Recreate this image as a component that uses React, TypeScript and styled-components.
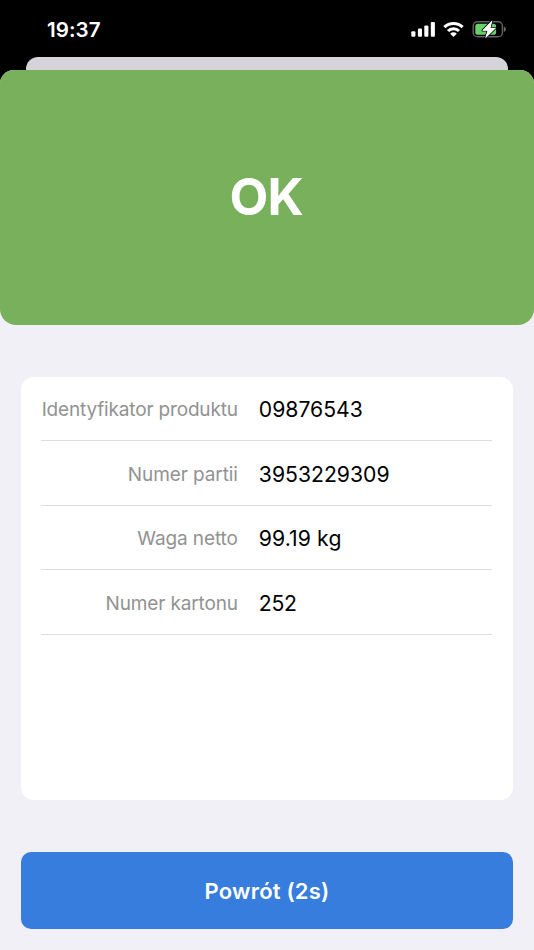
import React from "react";
import styled, { createGlobalStyle } from "styled-components";

const GlobalStyle = createGlobalStyle`
  * { box-sizing: border-box; }
  body {
    margin: 0;
    background: #000;
    font-family: Inter, "Liberation Sans", sans-serif;
    -webkit-font-smoothing: antialiased;
  }
`;

const Screen = styled.div`
  display: flex;
  flex-direction: column;
  width: 534px;
  height: 950px;
  overflow: hidden;
  background: #000;
`;

const StatusBar = styled.header`
  display: flex;
  justify-content: space-between;
  height: 57px;
  padding: 0 28px 0 47px;
`;

const Clock = styled.time`
  padding-top: 17px;
  font-size: 20.6px;
  line-height: 26px;
  font-weight: 600;
  letter-spacing: 0.05px;
  color: #fff;
`;

const StatusIcons = styled.div`
  padding-top: 16px;

  svg { display: block; }
`;

const SheetBehind = styled.div`
  flex: none;
  height: 13px;
  margin: 0 26px;
  border-radius: 12px 12px 0 0;
  background: #d6d4da;
`;

const Sheet = styled.main`
  flex: 1;
  display: flex;
  flex-direction: column;
  border-radius: 14px 14px 0 0;
  background: #f1f0f6;
  overflow: hidden;
`;

const ResultBanner = styled.section`
  flex: none;
  display: flex;
  align-items: center;
  justify-content: center;
  height: 255.4px;
  padding-bottom: 1.4px;
  border-radius: 0 0 16px 16px;
  background: #79b05b;
`;

const ResultText = styled.h1`
  margin: 0;
  padding-right: 1.5px;
  font-size: 50.4px;
  line-height: 60px;
  font-weight: 700;
  letter-spacing: -0.8px;
  color: #fff;
`;

const Card = styled.dl`
  flex: none;
  height: 423.5px;
  margin: 51.6px 21px 0;
  padding: 0 21px 0 20.3px;
  border-radius: 13px;
  background: #fff;
`;

const Row = styled.div`
  display: grid;
  grid-template-columns: 196.5px 1fr;
  column-gap: 21px;
  align-items: center;
  height: 64.45px;
  border-bottom: 1px solid #dedede;
`;

const Label = styled.dt<{ $tracking: number }>`
  padding-top: 3px;
  font-size: 19px;
  line-height: 26px;
  letter-spacing: ${(p) => p.$tracking}px;
  text-align: right;
  white-space: nowrap;
  color: #929292;
`;

const Value = styled.dd<{ $tracking: number }>`
  margin: 0;
  padding-top: 1.5px;
  font-size: 21.2px;
  line-height: 28px;
  letter-spacing: ${(p) => p.$tracking}px;
  white-space: nowrap;
  color: #000;
`;

const ReturnButton = styled.button`
  flex: none;
  height: 77.3px;
  margin: 51.7px 21px 0;
  padding: 0;
  border: 0;
  border-radius: 10px;
  background: #377ddd;
  color: #fff;
  font-family: inherit;
  font-size: 22px;
  font-weight: 600;
  letter-spacing: 0.2px;
`;

const rows = [
  { label: "Identyfikator produktu", value: "09876543", labelTracking: -0.17, valueTracking: 0 },
  { label: "Numer partii", value: "3953229309", labelTracking: -0.1, valueTracking: 0 },
  { label: "Waga netto", value: "99.19 kg", labelTracking: -0.1, valueTracking: 0.1 },
  { label: "Numer kartonu", value: "252", labelTracking: -0.15, valueTracking: -0.3 },
];

function Indicators() {
  return (
    <svg width="96" height="26" viewBox="0 0 96 26" aria-hidden="true">
      <g fill="#fff">
        <rect x="1.3" y="15.2" width="4.1" height="5.6" rx="1.1" />
        <rect x="7.9" y="12.6" width="4.1" height="8.2" rx="1.1" />
        <rect x="14.3" y="9.4" width="4.1" height="11.4" rx="1.1" />
        <rect x="20.8" y="6" width="4.1" height="14.8" rx="1.1" />
      </g>
      <g fill="none" stroke="#fff" strokeWidth="3.1">
        <path d="M34.4 11.2a13 13 0 0 1 18.2 0" />
        <path d="M38 15a7.8 7.8 0 0 1 11 0" />
      </g>
      <path fill="#fff" d="M40.2 17.7a4.7 4.7 0 0 1 6.6 0L43.5 21.1z" />
      <rect x="63.2" y="5.8" width="29.2" height="15" rx="4.4" fill="none" stroke="#626264" strokeWidth="1.4" />
      <path fill="#6a6a6c" d="M93.8 10.6q2.1 .8 2.1 2.7t-2.1 2.7z" />
      <rect x="65.3" y="7.8" width="20.8" height="11" rx="2.6" fill="#68d069" />
      <path
        d="M82 4.8 72.6 14.4h5.2l-2.2 7.4 10-9.8h-5.4z"
        fill="#fff"
        stroke="#000"
        strokeWidth="2.2"
        strokeLinejoin="round"
        paintOrder="stroke"
      />
      <path d="M82 4.8 72.6 14.4h5.2l-2.2 7.4 10-9.8h-5.4z" fill="#fff" stroke="#fff" strokeWidth=".5" strokeLinejoin="round" />
    </svg>
  );
}

export default function App() {
  return (
    <>
      <GlobalStyle />
      <Screen>
        <StatusBar>
          <Clock>19:37</Clock>
          <StatusIcons>
            <Indicators />
          </StatusIcons>
        </StatusBar>
        <SheetBehind />
        <Sheet>
          <ResultBanner>
            <ResultText>OK</ResultText>
          </ResultBanner>
          <Card>
            {rows.map((row) => (
              <Row key={row.label}>
                <Label $tracking={row.labelTracking}>{row.label}</Label>
                <Value $tracking={row.valueTracking}>{row.value}</Value>
              </Row>
            ))}
          </Card>
          <ReturnButton type="button">Powrót (2s)</ReturnButton>
        </Sheet>
      </Screen>
    </>
  );
}
